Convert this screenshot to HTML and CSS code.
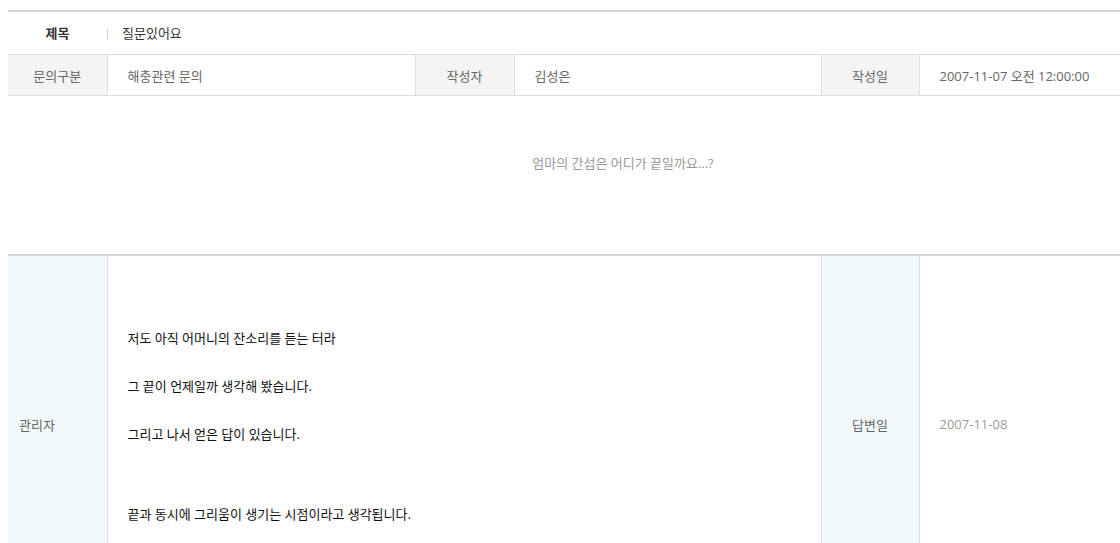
FILE: index.html
```html
<!DOCTYPE html>
<html lang="ko">
<head>
    <meta charset="UTF-8">
    <meta name="viewport" content="width=device-width, initial-scale=1.0">
    <title>문의 상세보기</title>
    <link rel="stylesheet" href="styles.css">
</head>
<body>
    <div class="board-view">
        <table class="view-table">
            <colgroup>
                <col class="col-label1">
                <col class="col-value1">
                <col class="col-label2">
                <col class="col-value">
                <col class="col-label3">
                <col>
            </colgroup>
            <tr class="title-row">
                <th>제목</th>
                <td colspan="5"><span class="bar"></span>질문있어요</td>
            </tr>
            <tr class="info-row">
                <th>문의구분</th>
                <td>해충관련 문의</td>
                <th>작성자</th>
                <td>김성은</td>
                <th>작성일</th>
                <td>2007-11-07 오전 12:00:00</td>
            </tr>
            <tr class="question-row">
                <td colspan="6">엄마의 간섭은 어디가 끝일까요...?</td>
            </tr>
            <tr class="answer-row">
                <th class="writer">관리자</th>
                <td colspan="3" class="answer">
                    저도 아직 어머니의 잔소리를 듣는 터라<br><br><br>
                    그 끝이 언제일까 생각해 봤습니다.<br><br><br>
                    그리고 나서 얻은 답이 있습니다.<br><br><br><br><br>
                    끝과 동시에 그리움이 생기는 시점이라고 생각됩니다.<br><br><br>
                    &nbsp;
                </td>
                <th>답변일</th>
                <td class="answer-date">2007-11-08</td>
            </tr>
        </table>
    </div>
</body>
</html>
```

FILE: styles.css
```css
/* 기본 */
body {
    margin: 0;
    overflow: hidden;
    font-family: "Open Sans", "Noto Sans CJK KR", sans-serif;
    font-size: 13px;
    color: #666;
    background: #fff;
}

.board-view {
    padding: 10px 0 0 8px;
}

/* 상세보기 테이블 */
.view-table {
    width: 1230px;
    table-layout: fixed;
    border-collapse: collapse;
    border-top: 2px solid #d4d4d4;
}

.col-label1 { width: 99px; }
.col-value1 { width: 308px; }
.col-value { width: 307px; }
.col-label2 { width: 99px; }
.col-label3 { width: 98px; }

.view-table th,
.view-table td {
    padding: 0 20px;
    font-weight: normal;
    text-align: left;
    border-bottom: 1px solid #ddd;
}

.view-table th {
    padding: 0;
    text-align: center;
}

/* 제목 */
.view-table .title-row th,
.view-table .title-row td {
    height: 40px;
    padding-bottom: 2px;
    color: #333;
}

.view-table .title-row th {
    font-weight: bold;
}

.view-table .title-row td {
    padding-left: 0;
}

.bar {
    display: inline-block;
    width: 1px;
    height: 10px;
    margin-right: 14px;
    background: #ccc;
    vertical-align: -1px;
}

/* 문의구분 / 작성자 / 작성일 */
.info-row th,
.info-row td {
    height: 40px;
}

.info-row th {
    background: #f4f4f4;
    border-left: 1px solid #ddd;
    border-right: 1px solid #ddd;
}

.info-row th:first-child {
    border-left: none;
}

/* 질문 내용 */
.view-table .question-row td {
    height: 158px;
    padding: 0;
    text-align: center;
    vertical-align: top;
    color: #999;
    border-bottom: 2px solid #d4d4d4;
    line-height: 16px;
}

.question-row td::before {
    content: "";
    display: block;
    height: 59px;
}

/* 답변 */
.view-table .answer-row th {
    background: #f2f9fc;
    border-left: 1px solid #ddd;
    border-right: 1px solid #ddd;
    height: 336px;
    padding-bottom: 4px;
}

.view-table .answer-row th.writer {
    border-left: none;
    text-align: left;
    padding-left: 11px;
}

.view-table .answer {
    padding: 74px 20px 0;
    vertical-align: top;
    color: #111;
    line-height: 16px;
}

.view-table .answer-date {
    color: #999;
    padding-bottom: 4px;
}
```
